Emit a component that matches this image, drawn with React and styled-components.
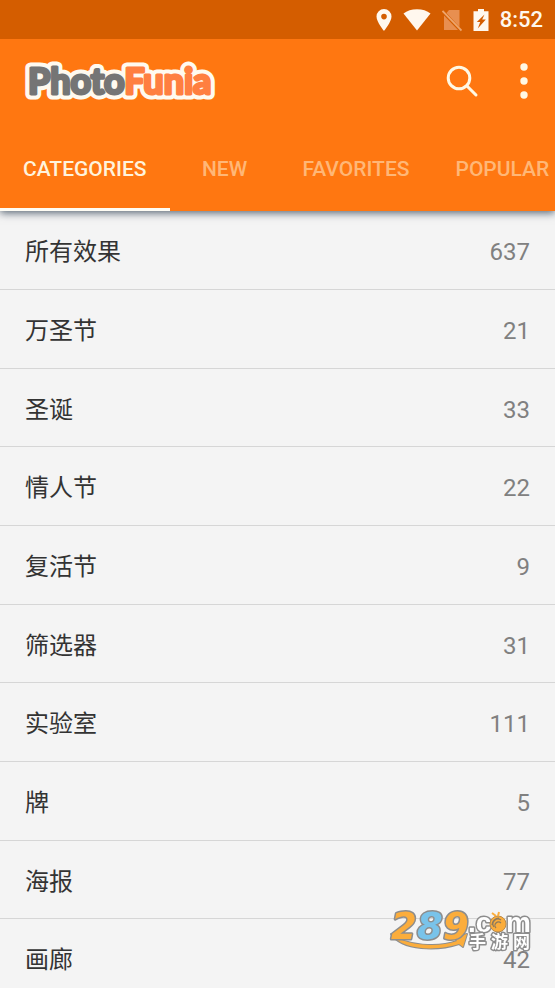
import React, { useState } from 'react';
import styled, { createGlobalStyle } from 'styled-components';

const GlobalStyle = createGlobalStyle`
  body {
    margin: 0;
    background-color: #f4f4f4;
    font-family: Roboto, 'Noto Sans CJK SC', sans-serif;
  }
`;

const Screen = styled.div`
  display: flex;
  flex-direction: column;
  height: 100vh;
  overflow: hidden;
`;

const StatusBar = styled.div`
  position: relative;
  z-index: 1;
  display: flex;
  align-items: center;
  justify-content: flex-end;
  flex-shrink: 0;
  gap: 11px;
  height: 39px;
  padding-right: 12px;
  box-sizing: border-box;
  background-color: #d45d00;
  color: #fff8ee;
`;

const StatusIcon = styled.svg`
  display: block;
  flex-shrink: 0;
  height: 24px;
`;

const Clock = styled.time`
  font-size: 22px;
  font-weight: 500;
  line-height: 24px;
`;

const Header = styled.header`
  position: relative;
  flex-shrink: 0;
  background-color: #ff7711;
  box-shadow: 0 2px 8px rgba(20, 40, 60, 0.7);
`;

const Toolbar = styled.div`
  display: flex;
  align-items: center;
  height: 88px;
  padding: 0 0 4px 20px;
  box-sizing: border-box;
`;

const Logo = styled.svg`
  display: block;
  width: 204px;
  height: 48px;
  margin-right: auto;
`;

const IconButton = styled.button`
  display: flex;
  align-items: center;
  justify-content: center;
  width: 62px;
  height: 48px;
  padding: 0;
  border: none;
  background: none;
  color: #fff8e4;
`;

const Tabs = styled.nav`
  display: flex;
  overflow: hidden;
`;

const Tab = styled.button`
  flex-shrink: 0;
  min-width: 110px;
  height: 84px;
  padding: 3px 23px 0;
  border: none;
  border-bottom: 3px solid ${props => props.$active ? '#fffdf4' : 'transparent'};
  background: none;
  color: ${props => props.$active ? '#fff3dc' : '#ffb777'};
  font-family: inherit;
  font-size: 21px;
  font-weight: 500;
  line-height: 24px;
`;

const CategoryList = styled.ul`
  flex: 1;
  min-height: 0;
  margin: 0;
  padding: 0;
  list-style: none;
  overflow-y: auto;
  scrollbar-width: none;
`;

const CategoryItem = styled.li`
  height: 79px;
  box-sizing: border-box;
  border-bottom: 1px solid #d6d6d6;

  &:nth-child(3n) {
    height: 78px;
  }
`;

const CategoryLink = styled.a`
  display: flex;
  align-items: center;
  justify-content: space-between;
  height: 100%;
  padding: 4px 25px 0;
  box-sizing: border-box;
  font-size: 24px;
  line-height: 32px;
  color: #333333;
  text-decoration: none;
`;

const Count = styled.span`
  color: #808080;
`;

const Watermark = styled.svg`
  position: fixed;
  right: 21px;
  bottom: 32px;
  width: 146px;
  height: 46px;
  pointer-events: none;
`;

const tabs = ['CATEGORIES', 'NEW', 'FAVORITES', 'POPULAR'];

const categories = [
  { name: '所有效果', count: 637 },
  { name: '万圣节', count: 21 },
  { name: '圣诞', count: 33 },
  { name: '情人节', count: 22 },
  { name: '复活节', count: 9 },
  { name: '筛选器', count: 31 },
  { name: '实验室', count: 111 },
  { name: '牌', count: 5 },
  { name: '海报', count: 77 },
  { name: '画廊', count: 42 },
];

const StatusIcons = () => (
  <>
    <StatusIcon width="16" viewBox="0 0 16 24" aria-hidden="true">
      <path fill="currentColor" fillRule="evenodd" d="M8 1a7.5 7.5 0 0 0-7.5 7.5C.5 14 8 23 8 23s7.5-9 7.5-14.5A7.5 7.5 0 0 0 8 1Zm0 4.800a2.800 2.800 0 1 1 0 5.600 2.800 2.800 0 0 1 0-5.600Z" />
    </StatusIcon>
    <StatusIcon width="28" viewBox="0 0 28 24" aria-hidden="true">
      <path fill="currentColor" d="M14 22.500.5 5.500C4 2.800 8.700 1.300 14 1.300S24 2.800 27.500 5.500Z" />
    </StatusIcon>
    <StatusIcon width="20" viewBox="0 0 20 24" aria-hidden="true">
      <path fill="#e88f50" d="M7 2h10.500v17L4.500 5ZM2 7.500 16 22H2Z" />
      <path stroke="#eda56c" strokeWidth="1.800" d="m.5 3 19 19.500" />
    </StatusIcon>
    <StatusIcon width="16" viewBox="0 0 16 24" aria-hidden="true">
      <path fill="currentColor" fillRule="evenodd" d="M5 1h6v2.300h4.500V23H.5V3.300H5ZM11.500 6.500 3.800 14h3.400l-2.400 6.500 8-9H9.200Z" />
    </StatusIcon>
  </>
);

const PhotoFuniaLogo = () => (
  <Logo viewBox="0 0 204 48" role="img" aria-label="PhotoFunia">
    <g fontFamily="Lato, sans-serif" fontSize="36" fontWeight="700" strokeLinejoin="round">
      <text x="8" y="37" fill="#fffaf0" stroke="#fffaf0" strokeWidth="11">PhotoFunia</text>
      <text x="8" y="37" strokeWidth="3">
        <tspan fill="#757575" stroke="#757575">Photo</tspan>
        <tspan fill="#ff7f40" stroke="#ff7f40">Funia</tspan>
      </text>
    </g>
  </Logo>
);

const SiteWatermark = () => (
  <Watermark viewBox="0 0 146 46" aria-hidden="true">
    <g stroke="#8d8d8d" strokeLinejoin="round" paintOrder="stroke">
      <path fill="#fbad3c" strokeWidth="2" d="M3 24C18 36 50 38 69 31l-3-4 13-3-4 13-4-3C50 41 14 41 3 24Z" />
      <g fontFamily="'DejaVu Sans', sans-serif" fontSize="37" fontWeight="700" fontStyle="italic" strokeWidth="3">
        <text x="3" y="29" fill="#fbad3c">2</text>
        <text x="29" y="29" fill="#79c3ea">8</text>
        <text x="55" y="29" fill="#fbad3c">9</text>
      </g>
      <g fontFamily="'Liberation Sans', sans-serif" fontSize="28" fontWeight="700" fill="#ffffff" strokeWidth="3">
        <text x="80" y="22">.c</text>
        <text x="118" y="22">m</text>
      </g>
      <g fontFamily="'Noto Sans CJK SC', sans-serif" fontSize="17" fontWeight="700" fill="#ffffff" strokeWidth="3">
        <text x="81" y="38">手</text>
        <text x="103" y="38">游</text>
        <text x="125" y="38">网</text>
      </g>
    </g>
    <circle cx="110" cy="14" r="8" fill="#fbad3c" stroke="#b98a4a" />
    <path fill="none" stroke="#8d7a5d" strokeWidth="1.200" d="M106 17a5 5 0 0 1 7-7M108 18a3.500 3.500 0 0 1 5-5M104 15a7 7 0 0 1 7-7" />
    <path fill="none" stroke="#fbad3c" strokeWidth="2" d="m104 3 4 3m3-4-1 4" />
  </Watermark>
);

const App = () => {
  const [activeTab, setActiveTab] = useState('CATEGORIES');

  return (
    <Screen>
      <GlobalStyle />
      <StatusBar>
        <StatusIcons />
        <Clock>8:52</Clock>
      </StatusBar>
      <Header>
        <Toolbar>
          <PhotoFuniaLogo />
          <IconButton aria-label="Search">
            <svg width="34" height="34" viewBox="0 0 34 34" fill="none" stroke="currentColor" strokeWidth="3">
              <circle cx="14" cy="14" r="10.800" />
              <path strokeLinecap="round" d="m22 22 9 9" />
            </svg>
          </IconButton>
          <IconButton aria-label="More options">
            <svg width="8" height="36" viewBox="0 0 8 36" fill="currentColor">
              <circle cx="4" cy="4" r="3.700" />
              <circle cx="4" cy="18" r="3.700" />
              <circle cx="4" cy="32" r="3.700" />
            </svg>
          </IconButton>
        </Toolbar>
        <Tabs>
          {tabs.map((tab) => (
            <Tab key={tab} $active={tab === activeTab} onClick={() => setActiveTab(tab)}>
              {tab}
            </Tab>
          ))}
        </Tabs>
      </Header>
      <CategoryList>
        {categories.map((category) => (
          <CategoryItem key={category.name}>
            <CategoryLink href="#">
              {category.name}
              <Count>{category.count}</Count>
            </CategoryLink>
          </CategoryItem>
        ))}
      </CategoryList>
      <SiteWatermark />
    </Screen>
  );
};

export default App;
